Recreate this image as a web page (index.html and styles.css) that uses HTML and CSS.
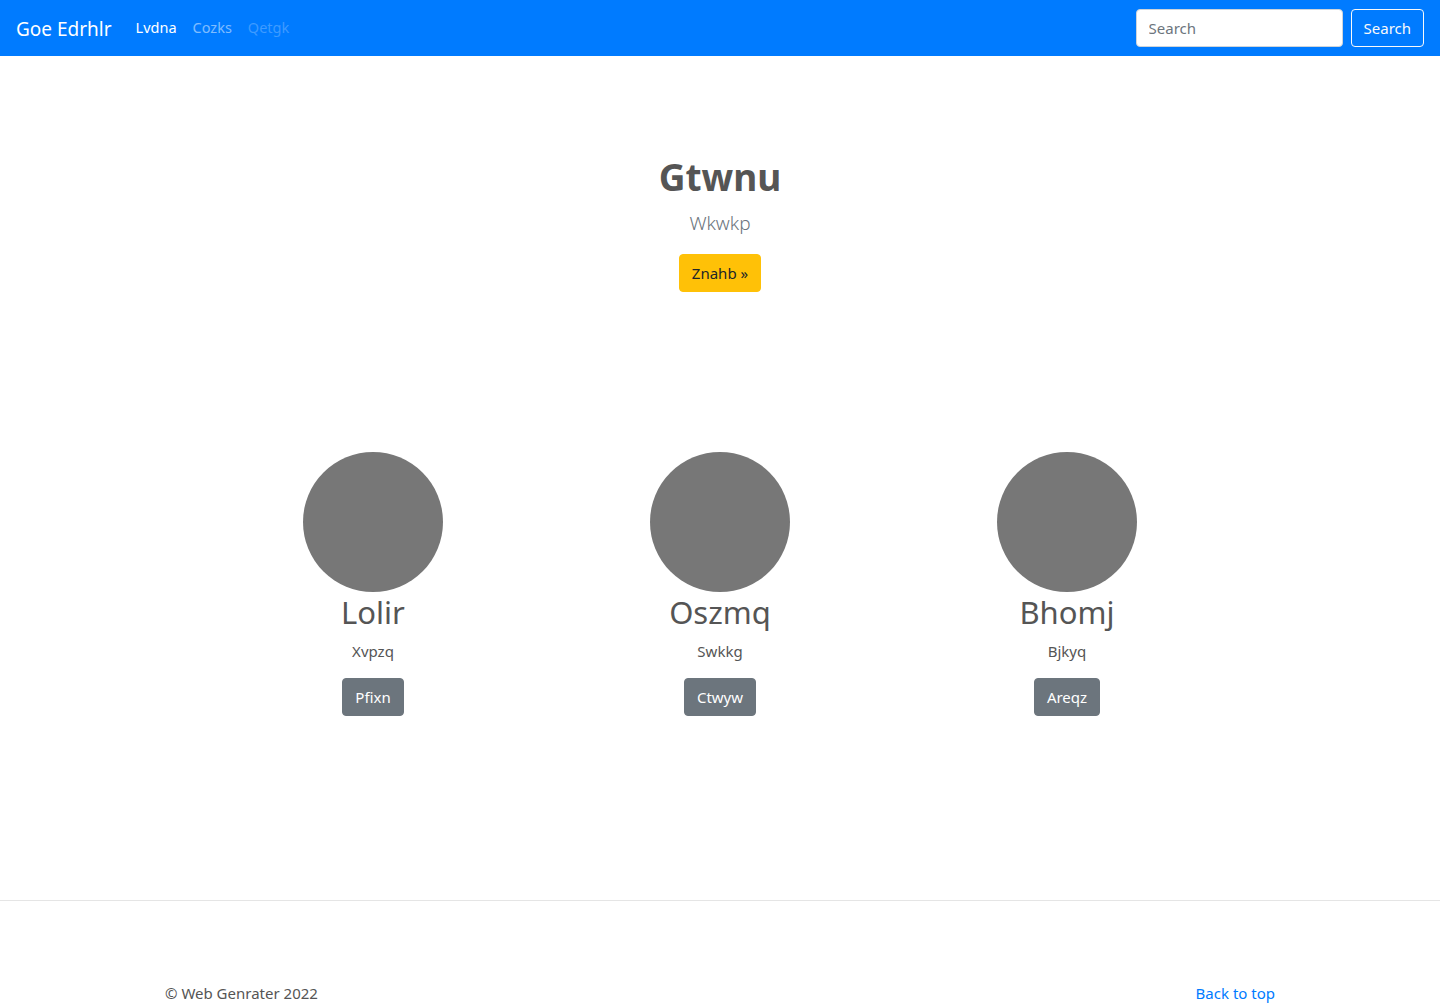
FILE: index.html
```html
<!DOCTYPE html>
<html lang="en">
<head>
<meta charset="utf-8">
<title>Goe Edrhlr</title>
<link rel="stylesheet" href="styles.css">
</head>
<body>
<header class="navbar">
  <a class="brand" href="#">Goe Edrhlr</a>
  <nav class="nav">
    <a class="nav-link active" href="#">Lvdna</a>
    <a class="nav-link" href="#">Cozks</a>
    <a class="nav-link disabled" href="#">Qetgk</a>
  </nav>
  <form class="search">
    <input class="search-input" type="text" placeholder="Search">
    <button class="btn btn-outline-light" type="button">Search</button>
  </form>
</header>

<main>
  <section class="hero">
    <h1 class="hero-title">Gtwnu</h1>
    <p class="lead">Wkwkp</p>
    <a class="btn btn-warning" href="#">Znahb »</a>
  </section>

  <section class="marketing">
    <div class="col">
      <div class="circle"></div>
      <h2 class="col-title">Lolir</h2>
      <p class="col-text">Xvpzq</p>
      <a class="btn btn-secondary" href="#">Pfixn</a>
    </div>
    <div class="col">
      <div class="circle"></div>
      <h2 class="col-title">Oszmq</h2>
      <p class="col-text">Swkkg</p>
      <a class="btn btn-secondary" href="#">Ctwyw</a>
    </div>
    <div class="col">
      <div class="circle"></div>
      <h2 class="col-title">Bhomj</h2>
      <p class="col-text">Bjkyq</p>
      <a class="btn btn-secondary" href="#">Areqz</a>
    </div>
  </section>
</main>

<footer class="footer">
  <div class="footer-inner">
    <p class="copy">© Web Genrater 2022</p>
    <a class="back" href="#">Back to top</a>
  </div>
</footer>
</body>
</html>
```

FILE: styles.css
```css
* { box-sizing: border-box; }
html, body { margin: 0; padding: 0; }
body {
  font-family: "Noto Sans", "Open Sans", "Liberation Sans", sans-serif;
  font-size: 16px;
  line-height: 1.5;
  color: #555;
  background: #fff;
}
a { text-decoration: none; }

.navbar {
  height: 56px;
  background: #007bff;
  display: flex;
  align-items: center;
  padding: 8px 16px;
}
.brand {
  color: #fff;
  font-size: 19px;
  line-height: 30px;
  margin-right: 16px;
  padding: 6px 0 4px;
}
.nav { display: flex; flex: 1; }
.nav-link {
  color: rgba(255,255,255,.5);
  padding: 8px;
  font-size: 14.5px;
}
.nav-link.active { color: #fff; }
.nav-link.disabled { color: rgba(255,255,255,.25); }

.search { display: flex; align-items: center; gap: 8px; }
.search-input {
  width: 207px;
  height: 38px;
  border: 1px solid #ced4da;
  border-radius: 4px;
  padding: 6px 12px;
  font: inherit;
  font-size: 15px;
  color: #495057;
  background: #fff;
  outline: none;
}
.search-input::placeholder { color: #6c757d; }

.btn {
  display: inline-block;
  font: inherit;
  font-size: 15px;
  line-height: 24px;
  padding: 6px 12px;
  border: 1px solid transparent;
  border-radius: 4px;
  cursor: pointer;
}
.btn-outline-light {
  background: transparent;
  color: #f8f9fa;
  border-color: #f8f9fa;
}
.btn-warning { background: #ffc107; border-color: #ffc107; color: #212529; }
.btn-secondary { background: #6c757d; border-color: #6c757d; color: #fff; }

.hero {
  text-align: center;
  padding-top: 97px;
}
.hero-title {
  margin: 0 0 8px;
  font-size: 37px;
  line-height: 48px;
  font-weight: 700;
  color: #555;
}
.lead {
  margin: 0 0 16px;
  font-size: 19px;
  font-weight: 300;
  line-height: 1.5;
  color: #6c757d;
}

.marketing {
  width: 1041px;
  margin: 160px auto 0;
  display: grid;
  grid-template-columns: repeat(3, 1fr);
}
.col { text-align: center; }
.circle {
  width: 140px;
  height: 140px;
  border-radius: 50%;
  background: #777;
  margin: 0 auto;
}
.col-title {
  margin: 0 0 8px;
  font-size: 31px;
  font-weight: 400;
  line-height: 40px;
  color: #555;
}
.col-text {
  margin: 0 0 16px;
  font-size: 15px;
}

.footer {
  margin-top: 184px;
  border-top: 1px solid #e5e5e5;
}
.footer-inner {
  width: 1140px;
  margin: 0 auto;
  padding: 81px 15px 0;
  display: flex;
  justify-content: space-between;
  align-items: center;
}
.copy { margin: 0; font-size: 15px; color: #555; }
.back { color: #007bff; font-size: 15px; }
```
